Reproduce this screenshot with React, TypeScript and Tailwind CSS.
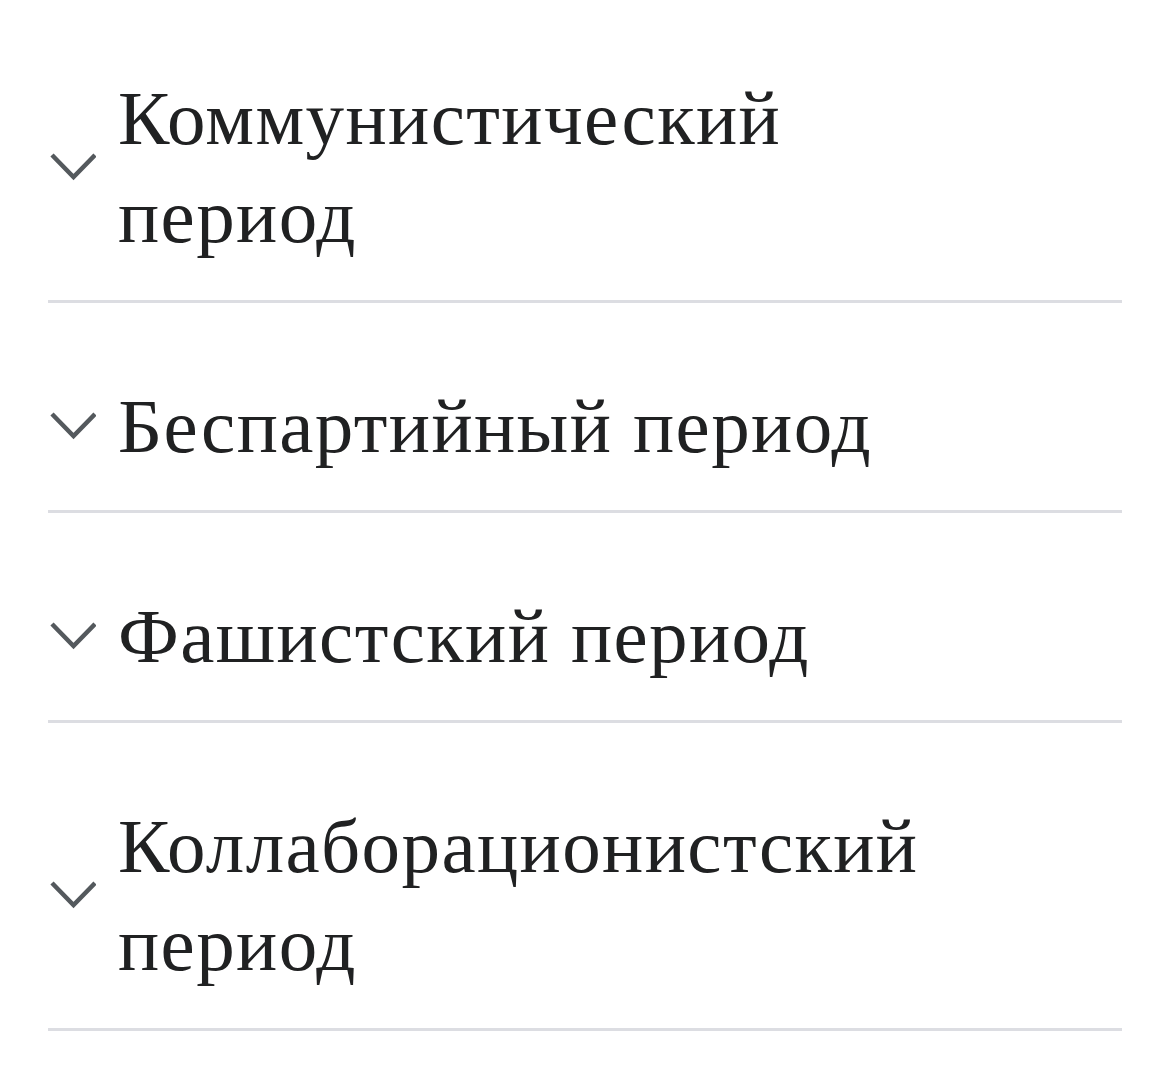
import React from "react";

const Chevron = () => (
  <svg width="48" height="30" viewBox="0 0 48 30" className="shrink-0" aria-hidden>
    <polyline points="4,3 25.5,25 47,3" fill="none" stroke="#54595d" strokeWidth="4.5" />
  </svg>
);

const items: { title: string; first?: boolean }[] = [
  { title: "Коммунистический период", first: true },
  { title: "Беспартийный период" },
  { title: "Фашистский период" },
  { title: "Коллаборационистский период" },
];

export default function App() {
  return (
    <div className="min-h-[1083px] bg-white px-[48px]" style={{ fontFamily: '"Liberation Serif", "Times New Roman", serif' }}>
      {items.map((it, i) => (
        <div
          key={i}
          className={`flex items-center border-b-[3px] border-[#dcdde2] pb-[35px] ${it.first ? "pt-[69px]" : "pt-[74px]"}`}
        >
          <div className="w-[70px] shrink-0 flex items-center">
            <Chevron />
          </div>
          <div className="text-[77px] leading-[98px] tracking-[1.4px] text-[#202122] max-w-[820px]">{it.title}</div>
        </div>
      ))}
    </div>
  );
}
